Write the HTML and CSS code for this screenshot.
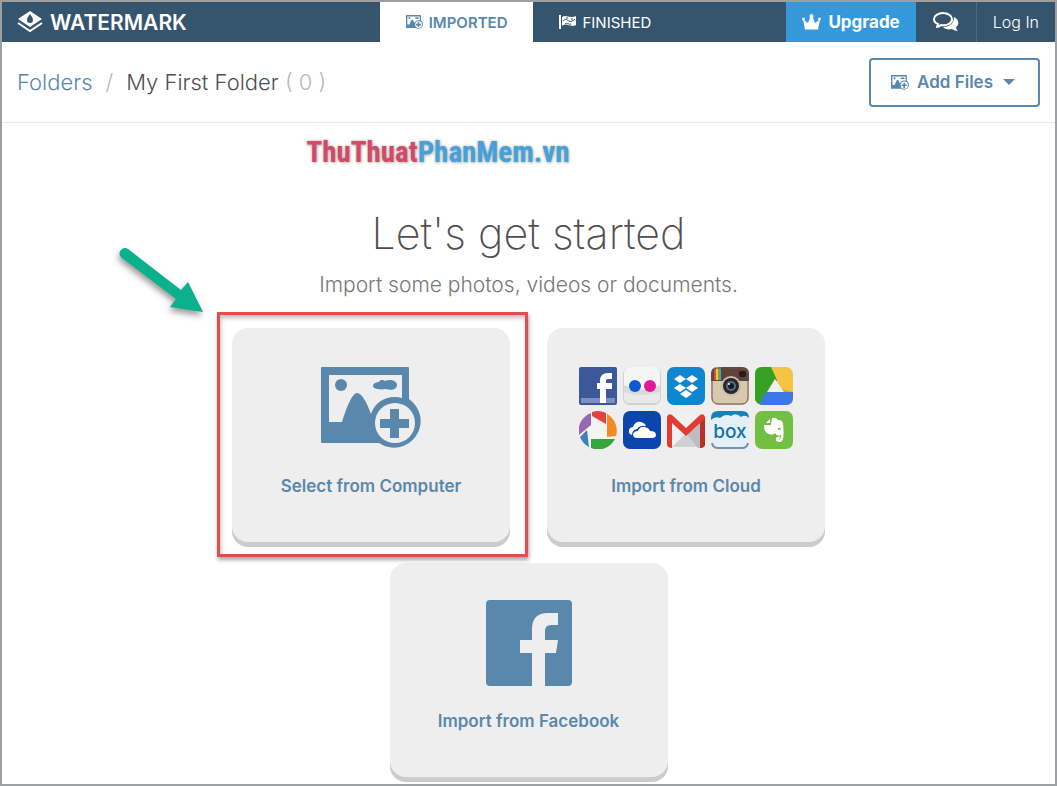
FILE: index.html
```
<!DOCTYPE html>
<html lang="en">

<head>
  <meta charset="UTF-8">
  <meta name="viewport" content="width=device-width, initial-scale=1.0">
  <title>Watermark</title>
  <link rel="stylesheet" href="styles.css">
</head>

<body>
  <!-- shared icons -->
  <svg class="defs" aria-hidden="true">
    <symbol id="add-image" viewBox="0 0 100 82">
      <path fill="currentColor" fill-rule="evenodd" d="M1 0H87Q88 0 88 1V32A26 26 0 1 1 58 76H1Q0 76 0 75V1Q0 0 1 0Z
        M8 8V55H21C25 42 31 26 36 26C41 26 46 36 50 47C53 37 62 30 74 30Q78 30 81 31V8Z
        M74 36A20 20 0 1 0 74 76A20 20 0 1 0 74 36Z" />
      <circle cx="20" cy="18" r="6" fill="currentColor" />
      <path fill="currentColor" d="M52 19C52 16 56 15 58 15C59 12 63 13 64 14C68 12 76 13 76 18C76 22 71 24 65 22C59 23 52 22 52 19Z" />
      <path fill="currentColor" d="M69 42H78V52H88V61H78V71H69V61H59V52H69Z" />
    </symbol>
  </svg>

  <div class="page">
    <header class="topbar">
      <a class="brand" href="#">
        <svg width="26" height="22" viewBox="0 0 26 22" fill="none">
          <path fill="#fff" fill-rule="evenodd" d="M13 0L25 8L13 16L1 8ZM13 3C11 6 10 7 10 9A3 3 0 0 0 16 9C16 7 15 6 13 3Z" />
          <path stroke="#fff" stroke-width="2" d="M1 12L13 20L25 12" />
        </svg>
        WATERMARK
      </a>
      <nav class="tabs">
        <a class="tab active" href="#"><svg width="17" height="14"><use href="#add-image" /></svg>IMPORTED</a>
        <a class="tab" href="#">
          <svg width="17" height="14" viewBox="0 0 17 14">
            <path fill="#fff" d="M0 0H2V14H0Z" />
            <path fill="#fff" d="M3 2C7 -1 10 4 17 1V10C11 13 8 7 3 11Z" />
            <path fill="none" stroke="#35546e" d="M4 6C6 3 8 5 10 6S14 6 16 4M6 9C8 7 10 10 12 9M8 2V4M13 3V5" />
          </svg>FINISHED</a>
      </nav>
      <div class="account">
        <a class="upgrade" href="#">
          <svg width="19" height="16" viewBox="0 0 38 32" fill="#fff">
            <path d="M6 31L2 11L12 18L17 5H21L26 18L36 11L32 31Z" />
            <circle cx="19" cy="4" r="4" />
            <circle cx="3" cy="10" r="3" />
            <circle cx="35" cy="10" r="3" />
          </svg>
          Upgrade
        </a>
        <a class="chat" href="#" aria-label="Chat">
          <svg width="26" height="20" viewBox="0 0 26 20">
            <path fill="#fff" d="M21 5C27 8 26 13 23 15C23 17 24 18 25 19C22 19 21 18 19 17C15 18 12 17 10 15C17 15 21 11 21 5Z" />
            <path fill="none" stroke="#fff" stroke-width="2" d="M10 1C5 1 1 4 1 7C1 9 2 11 5 12C5 14 4 15 3 15C6 15 7 14 8 13C15 14 19 11 19 7C19 4 15 1 10 1Z" />
          </svg>
        </a>
        <a class="login" href="#">Log In</a>
      </div>
    </header>

    <div class="toolbar">
      <div class="crumbs">
        <a href="#">Folders</a>
        <span class="muted">/</span>
        <span>My First Folder <span class="muted">( 0 )</span></span>
      </div>
      <button class="add-files">
        <svg width="18" height="15"><use href="#add-image" /></svg>
        Add Files
        <span class="caret"></span>
      </button>
    </div>

    <main>
      <div class="site-name"><span>ThuThuat</span>PhanMem.vn</div>
      <h1>Let's get started</h1>
      <p class="lead">Import some photos, videos or documents.</p>

      <div class="cards">
        <div class="card-wrap">
          <button class="card">
            <span class="art"><svg width="100" height="82"><use href="#add-image" /></svg></span>
            Select from Computer
          </button>
          <div class="highlight"></div>
          <svg class="arrow" width="100" height="80" viewBox="0 0 100 80">
            <path fill="#0bb08d" d="M11 10A5 5 0 0 1 18 9L71 50L78 42L93 72L60 67L66 59L12 18A5 5 0 0 1 11 10Z" />
          </svg>
        </div>

        <button class="card">
          <span class="art">
            <span class="services">
              <!-- facebook -->
              <svg viewBox="0 0 38 38">
                <rect width="38" height="38" rx="2" fill="#3b5998" />
                <path fill="#7a90bf" d="M2 31H36V36H2Z" />
                <path fill="none" stroke="#fff" stroke-width="6" d="M24 36V14Q24 9 29 9H33M18 19H33" />
              </svg>
              <!-- flickr -->
              <svg viewBox="0 0 38 38">
                <rect width="38" height="38" rx="7" fill="#d2d2d2" />
                <rect x="1" y="0" width="36" height="36" rx="6" fill="#f5f5f5" />
                <path fill="#dadada" d="M1 18Q19 27 37 18V30Q37 36 31 36H7Q1 36 1 30Z" />
                <path fill="#e9e9e9" d="M1 25Q19 31 37 25V30Q37 36 31 36H7Q1 36 1 30Z" />
                <circle cx="12" cy="19" r="6" fill="#0a5bd3" />
                <circle cx="27" cy="19" r="6" fill="#e0189a" />
              </svg>
              <!-- dropbox -->
              <svg viewBox="0 0 38 38">
                <rect width="38" height="38" rx="7" fill="#0e86d0" />
                <path fill="#fff" d="M13 8L19 12L13 16L7 12ZM25 8L31 12L25 16L19 12ZM13 17L19 21L13 25L7 21ZM25 17L31 21L25 25L19 21ZM19 23L25 27L19 31L13 27Z" />
              </svg>
              <!-- instagram -->
              <svg viewBox="0 0 38 38">
                <rect width="38" height="38" rx="7" fill="#d8c8ad" />
                <path fill="#5d4338" d="M7 0H31Q38 0 38 7V14H0V7Q0 0 7 0Z" />
                <path fill="#e34a3d" d="M3 1H5V13H3Z" />
                <path fill="#efc83c" d="M5 0H7V13H5Z" />
                <path fill="#69a84f" d="M7 0H9V13H7Z" />
                <path fill="#4d9bc4" d="M9 0H10V13H9Z" />
                <rect x="28" y="4" width="7" height="6" rx="2" fill="#241d1b" />
                <circle cx="20" cy="19" r="10" fill="#c9bda8" />
                <circle cx="20" cy="19" r="8" fill="#26262b" />
                <circle cx="20" cy="19" r="5" fill="#5c6c80" />
                <circle cx="20" cy="19" r="3" fill="#171c28" />
                <circle cx="18" cy="17" r="1" fill="#fff" />
                <rect x="1" y="1" width="36" height="36" rx="6" fill="none" stroke="#6b5549" />
              </svg>
              <!-- drive -->
              <svg viewBox="0 0 38 38">
                <rect width="38" height="38" rx="7" fill="#f5c445" />
                <path fill="#35a121" d="M16 0H7Q0 0 0 7V31Q0 35 4 37L22 13Z" />
                <path fill="#3d79e6" d="M11 25H38V31Q38 38 31 38H7Q5 38 4 37Z" />
                <path fill="#efefef" d="M20 12L29 25H12Z" />
                <path fill="#e1a92c" d="M27 22L38 25H29Z" />
              </svg>
              <!-- picasa -->
              <svg viewBox="0 0 38 38">
                <circle cx="19" cy="19" r="19" fill="#f4f4f4" />
                <path fill="#9668b0" d="M12 2V14L0 24A19 19 0 0 1 12 2Z" />
                <path fill="#e5413c" d="M13 1A19 19 0 0 1 27 2V13L13 5Z" />
                <path fill="#f28b25" d="M28 3A19 19 0 0 1 37 25L28 26Z" />
                <path fill="#35a53c" d="M36 28A19 19 0 0 1 12 37V28Z" />
                <path fill="#407fc0" d="M10 36A19 19 0 0 1 1 26L8 19Z" />
              </svg>
              <!-- onedrive -->
              <svg viewBox="0 0 38 38">
                <rect width="38" height="38" rx="7" fill="#0a46ad" />
                <path fill="#fff" d="M9 24Q5 23 6 19Q7 16 10 16Q12 10 18 11Q22 12 23 15Q17 14 14 18Q9 19 9 24Z" />
                <path fill="#fff" d="M14 27Q10 27 10 23Q11 20 15 20Q17 15 22 16Q26 17 27 20Q33 20 33 24Q33 27 29 27Z" />
              </svg>
              <!-- gmail -->
              <svg viewBox="0 0 38 38">
                <rect y="3" width="38" height="34" rx="3" fill="#f0f0f0" />
                <path fill="#d0d0d0" d="M19 22L5 36H33Z" />
                <path fill="#bdbdbd" d="M19 22L33 8V37H31Z" />
                <path fill="#e13c31" d="M0 6Q1 2 5 4L19 17L33 4Q37 2 38 6V34Q37 37 33 37V12L19 25L5 12V37Q1 37 0 34Z" />
                <path fill="#b9302a" d="M33 12L38 8V34Q37 37 33 37Z" />
              </svg>
              <!-- box -->
              <svg viewBox="0 0 38 38">
                <rect width="38" height="38" rx="7" fill="#e3f0f7" />
                <path fill="#197fb8" d="M7 0H31Q38 0 38 7Q34 3 30 6Q25 1 20 5Q14 2 9 7Q4 5 0 9V7Q0 0 7 0Z" />
                <text x="19" y="27" class="box-name">box</text>
                <path fill="none" stroke="#7792a3" stroke-width="2" d="M1 32Q2 37 7 37H31Q36 37 37 32" />
              </svg>
              <!-- evernote -->
              <svg viewBox="0 0 38 38">
                <rect width="38" height="38" rx="7" fill="#73bf43" />
                <path fill="#fff" d="M15 8V12H11ZM17 7Q21 6 23 9Q28 9 28 13Q30 31 25 31Q20 31 21 27Q22 25 25 26Q26 28 23 28Q26 30 26 24Q22 26 20 22Q18 25 14 23Q9 22 9 14H16Z" />
                <path fill="#73bf43" d="M23 17Q26 16 26 19Q24 18 23 19Z" />
              </svg>
            </span>
          </span>
          Import from Cloud
        </button>

        <button class="card">
          <span class="art">
            <svg width="86" height="86" viewBox="0 0 86 86">
              <rect width="86" height="86" rx="4" fill="#5a88ad" />
              <path fill="#eee" d="M46 86V53H34V40H46V29Q46 13 62 13H72V25H65Q59 25 59 31V40H72L70 53H59V86Z" />
            </svg>
          </span>
          Import from Facebook
        </button>
      </div>
    </main>
  </div>
</body>

</html>
```
FILE: styles.css
```
* {
  box-sizing: border-box;
}

body {
  margin: 0;
  background: #fff;
  color: #4f4f4f;
  font-family: Inter, "Open Sans", sans-serif;
}

a {
  text-decoration: none;
}

button {
  cursor: pointer;
  font-family: inherit;
}

.defs {
  position: absolute;
  width: 0;
  height: 0;
}

.page {
  min-height: 100vh;
  border: 2px solid #9d9fa1;
}

.topbar {
  display: grid;
  grid-template-columns: 1fr auto 1fr;
  height: 40px;
  background: #35546e;
}

.topbar a {
  display: flex;
  align-items: center;
  color: #fff;
}

.brand {
  gap: 7px;
  padding-left: 15px;
  font-size: 21px;
  font-weight: 600;
}

.tabs,
.account {
  display: flex;
}

.tab {
  gap: 6px;
  padding: 0 26px;
  font-size: 15px;
}

.topbar .active {
  background: #fff;
  color: #5a88ad;
  font-weight: 600;
}

.account {
  justify-content: flex-end;
}

.upgrade {
  gap: 7px;
  padding: 0 16px;
  background: #3498db;
  font-size: 17px;
  font-weight: 700;
}

.chat {
  padding: 0 17px;
}

.login {
  padding: 0 16px;
  border-left: 1px solid #4a6a84;
  font-size: 16px;
  font-weight: 300;
}

.toolbar {
  display: flex;
  align-items: center;
  justify-content: space-between;
  height: 81px;
  padding: 0 15px;
  border-bottom: 1px solid #e8e8e8;
}

.crumbs {
  display: flex;
  gap: 13px;
  font-size: 22px;
  font-weight: 300;
}

.crumbs a {
  color: #5a88ad;
}

.muted {
  color: #b8b8b8;
}

.add-files {
  display: flex;
  align-items: center;
  gap: 8px;
  height: 49px;
  padding: 0 23px 0 20px;
  border: 2px solid #5a88ad;
  border-radius: 4px;
  background: #fff;
  color: #5a88ad;
  font-size: 17px;
  font-weight: 600;
}

.caret {
  margin-left: 2px;
  border: 6px solid transparent;
  border-top-color: #5a88ad;
  border-bottom: 0;
}

main {
  text-align: center;
}

.site-name {
  padding: 10px 0 0;
  margin-right: 181px;
  color: #45a2d9;
  font-family: "Liberation Sans Narrow", "Roboto Condensed", "Liberation Sans", sans-serif;
  font-size: 29px;
  font-weight: 700;
  line-height: 38px;
  text-shadow: 0 0 3px #b0b0b0, 1px 1px 3px #ccc;
}

.site-name span {
  color: #d34a66;
}

h1 {
  margin: 36px 0 0;
  font-size: 43px;
  font-weight: 200;
  line-height: 52px;
}

.lead {
  margin: 12px 0 0;
  color: #777;
  font-size: 21px;
  font-weight: 300;
  line-height: 28px;
}

.cards {
  display: flex;
  flex-wrap: wrap;
  justify-content: center;
  gap: 16px 37px;
  max-width: 640px;
  margin: 29px auto 0;
}

.card-wrap {
  position: relative;
}

.card {
  display: flex;
  flex-direction: column;
  align-items: center;
  width: 278px;
  height: 219px;
  padding: 30px 0 0;
  border: 0;
  border-radius: 16px;
  background: #eee;
  box-shadow: inset 0 -5px #ccc;
  color: #5a88ad;
  font-size: 17px;
  font-weight: 600;
  line-height: 24px;
}

.art {
  display: flex;
  align-items: center;
  justify-content: center;
  height: 100px;
  margin-bottom: 16px;
}

.services {
  display: grid;
  grid-template-columns: repeat(5, 38px);
  gap: 6px;
}

.services svg {
  display: block;
  width: 38px;
  height: 38px;
}

.box-name {
  fill: #1471ad;
  font-size: 19px;
  font-weight: 500;
  text-anchor: middle;
}

.highlight {
  position: absolute;
  inset: -16px -18px -10px -15px;
  border: 3px solid #e04f4f;
  box-shadow: 1px 3px 4px rgba(0, 0, 0, 0.35), inset 1px 3px 4px rgba(0, 0, 0, 0.25);
  pointer-events: none;
}

.arrow {
  position: absolute;
  top: -88px;
  left: -122px;
  filter: drop-shadow(-1px 4px 3px rgba(0, 0, 0, 0.4));
}
```
